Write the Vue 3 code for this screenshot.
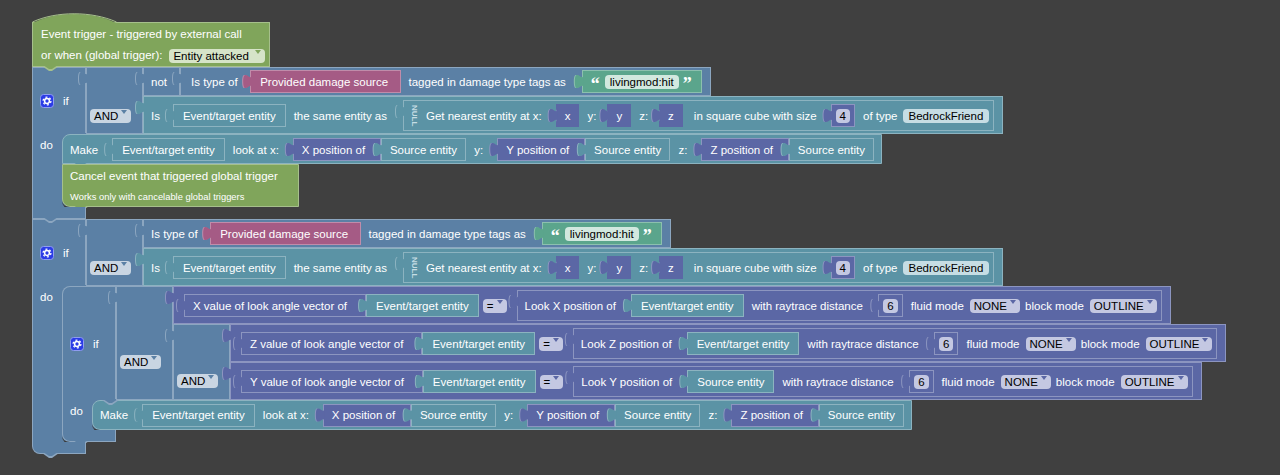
<script setup>
const axes = ['X', 'Y', 'Z']
const firstCompare = { axis: 'X', arg: 'Event/target entity' }
const restCompares = [
  { axis: 'Z', arg: 'Event/target entity' },
  { axis: 'Y', arg: 'Source entity' }
]
</script>

<template>
  <div class="canvas">
    <svg class="defs">
      <symbol id="gear" viewBox="0 0 14 14">
        <rect x="0.5" y="0.5" width="13" height="13" rx="3" fill="#2b3ce6" stroke="#8f9cf0" />
        <circle cx="7" cy="7" r="2.4" fill="none" stroke="#fff" stroke-width="1.5" />
        <circle cx="7" cy="7" r="3.9" fill="none" stroke="#fff" stroke-width="1.3" stroke-dasharray="2 2.08" />
      </symbol>
    </svg>

    <div class="b lime trigger notched">
      <svg class="hat" width="85" height="10" viewBox="0 0 85 10">
        <path d="M0.5,10 C24,-2 60,-2 84.5,10 Z" fill="#80a55b" />
        <path d="M0.5,9 C24,-2 60,-2 84.5,9" fill="none" stroke="#a6c08c" />
      </svg>
      <div class="tl">Event trigger - triggered by external call</div>
      <div class="tl">or when (global trigger):<span class="dd ddl">Entity attacked</span></div>
    </div>

    <!-- first if -->
    <div class="if">
      <div class="ifrow">
        <div class="b blue head notched n40">
          <svg class="gear"><use href="#gear" /></svg><span class="t">if</span>
        </div>
        <div class="b blue edge andcol"><span class="dd">AND</span></div>
        <div class="col">
          <div class="rowf">
            <div class="b blue edge rowa w37"><span class="t">not</span></div>
            <div class="b blue edge rowa shift">
              <span class="t">Is type of</span>
              <div class="sh pink in">Provided damage source</div>
              <span class="t">tagged in damage type tags as</span>
              <div class="strb str in"><span class="q">“</span><span class="pill lv">livingmod:hit</span><span class="q">”</span></div>
            </div>
          </div>
          <div class="b teal edge rowb">
            <span class="t">Is</span>
            <div class="sh ev teal in">Event/target entity</div>
            <span class="t">the same entity as</span>
            <div class="b teal in nullbox">
              <span class="null">NULL</span>
              <span class="t">Get nearest entity at x:</span>
              <div class="sh purple in vv v1">x</div>
              <span class="t">y:</span>
              <div class="sh purple in vv">y</div>
              <span class="t">z:</span>
              <div class="sh purple in vv">z</div>
              <span class="t isq">in square cube with size</span>
              <div class="sh purple in num"><span class="pill">4</span></div>
              <span class="t">of type</span>
              <span class="pill lv bf">BedrockFriend</span>
            </div>
          </div>
        </div>
      </div>
      <div class="dorow">
        <div class="b blue docol"><span class="t">do</span></div>
        <div class="stmts">
          <div class="b teal make notched first">
            <span class="t">Make</span>
            <div class="sh ev teal in">Event/target entity</div>
            <span class="t">look at x:</span>
            <template v-for="(a, i) in axes" :key="a">
              <span v-if="i" class="t">{{ a.toLowerCase() }}:</span>
              <div class="chain in">
                <div class="seg purple edge">{{ a }} position of</div>
                <div class="sh teal edge">Source entity</div>
              </div>
            </template>
          </div>
          <div class="b lime cancel notched last">
            <i class="corner"></i>
            <div class="c1">Cancel event that triggered global trigger</div>
            <div class="c2">Works only with cancelable global triggers</div>
          </div>
        </div>
      </div>
      <div class="b blue ifend notched e12"></div>
    </div>

    <!-- second if -->
    <div class="if">
      <div class="ifrow">
        <div class="b blue head notched n40">
          <svg class="gear"><use href="#gear" /></svg><span class="t">if</span>
        </div>
        <div class="b blue edge andcol"><span class="dd">AND</span></div>
        <div class="col">
          <div class="b blue edge rowa">
            <span class="t">Is type of</span>
            <div class="sh pink in">Provided damage source</div>
            <span class="t">tagged in damage type tags as</span>
            <div class="strb str in"><span class="q">“</span><span class="pill lv">livingmod:hit</span><span class="q">”</span></div>
          </div>
          <div class="b teal edge rowb">
            <span class="t">Is</span>
            <div class="sh ev teal in">Event/target entity</div>
            <span class="t">the same entity as</span>
            <div class="b teal in nullbox">
              <span class="null">NULL</span>
              <span class="t">Get nearest entity at x:</span>
              <div class="sh purple in vv v1">x</div>
              <span class="t">y:</span>
              <div class="sh purple in vv">y</div>
              <span class="t">z:</span>
              <div class="sh purple in vv">z</div>
              <span class="t isq">in square cube with size</span>
              <div class="sh purple in num"><span class="pill">4</span></div>
              <span class="t">of type</span>
              <span class="pill lv bf">BedrockFriend</span>
            </div>
          </div>
        </div>
      </div>
      <div class="dorow">
        <div class="b blue docol"><span class="t">do</span></div>
        <div class="stmts">
          <!-- inner if -->
          <div class="if">
            <div class="ifrow">
              <div class="b blue head notched n40 first">
                <svg class="gear"><use href="#gear" /></svg><span class="t">if</span>
              </div>
              <div class="b blue edge andcol deep"><span class="dd">AND</span></div>
              <div class="col">
                <div class="b purple edge cmp">
                  <div class="chain in">
                    <div class="seg purple edge lab">{{ firstCompare.axis }} value of look angle vector of</div>
                    <div class="sh ev teal edge">Event/target entity</div>
                  </div>
                  <span class="dd eq">=</span>
                  <div class="b purple in look">
                    <span class="t">Look {{ firstCompare.axis }} position of</span>
                    <div class="sh ev teal in">{{ firstCompare.arg }}</div>
                    <span class="t">with raytrace distance</span>
                    <div class="sh purple in num"><span class="pill">6</span></div>
                    <span class="t">fluid mode</span>
                    <span class="dd">NONE</span>
                    <span class="t tight">block mode</span>
                    <span class="dd">OUTLINE</span>
                  </div>
                </div>
                <div class="rowf">
                  <div class="b blue edge andcol two"><span class="dd">AND</span></div>
                  <div class="col">
                    <div v-for="d in restCompares" :key="d.axis" class="b purple edge cmp">
                      <div class="chain in">
                        <div class="seg purple edge lab">{{ d.axis }} value of look angle vector of</div>
                        <div class="sh ev teal edge">Event/target entity</div>
                      </div>
                      <span class="dd eq">=</span>
                      <div class="b purple in look">
                        <span class="t">Look {{ d.axis }} position of</span>
                        <div class="sh ev teal in">{{ d.arg }}</div>
                        <span class="t">with raytrace distance</span>
                        <div class="sh purple in num"><span class="pill">6</span></div>
                        <span class="t">fluid mode</span>
                        <span class="dd">NONE</span>
                        <span class="t tight">block mode</span>
                        <span class="dd">OUTLINE</span>
                      </div>
                    </div>
                  </div>
                </div>
              </div>
            </div>
            <div class="dorow">
              <div class="b blue docol"><span class="t">do</span></div>
              <div class="stmts">
                <div class="b teal make first last">
                  <i class="corner"></i>
                  <span class="t">Make</span>
                  <div class="sh ev teal in">Event/target entity</div>
                  <span class="t">look at x:</span>
                  <template v-for="(a, i) in axes" :key="a">
                    <span v-if="i" class="t">{{ a.toLowerCase() }}:</span>
                    <div class="chain in">
                      <div class="seg purple edge">{{ a }} position of</div>
                      <div class="sh teal edge">Source entity</div>
                    </div>
                  </template>
                </div>
              </div>
            </div>
            <div class="b blue ifend notched last">
              <i class="corner"></i>
            </div>
          </div>
        </div>
      </div>
      <div class="b blue ifend notched"></div>
    </div>
  </div>
</template>

<style>
html, body { margin: 0; background: #404040; }
</style>

<style scoped>
.canvas {
  width: 1280px;
  height: 475px;
  box-sizing: border-box;
  padding: 22px 0 0 32px;
  overflow: hidden;
  background: #404040;
  display: flex;
  flex-direction: column;
  align-items: flex-start;
  font: 11.5px "Liberation Sans", Arial, sans-serif;
  color: #fff;
}
.defs { display: none; }

.blue { --c: #5b80a5; --l: #8ca6c0; --p: #c9d5e2; }
.teal { --c: #5b93a5; --l: #8cb3c0; --p: #c6dde4; }
.purple { --c: #5b67a5; --l: #8c95c0; --p: #c4c8e2; }
.pink { --c: #a55b85; --l: #c08caa; --p: #eee; }
.str { --c: #5ba58c; --l: #8cc0ae; --p: #d2e8df; }
.lime { --c: #80a55b; --l: #a6c08c; --p: #d6e4c8; }

.b {
  position: relative;
  box-sizing: border-box;
  display: flex;
  align-items: center;
  gap: 8px;
  background: var(--c);
  border: 1px solid var(--l);
}
.t { white-space: nowrap; line-height: 14px; }
.tight { margin-left: -3px; }
.isq { margin-left: 3px; }

/* puzzle tabs */
.in, .edge { position: relative; z-index: 3; }
.in { margin-left: 6px; }
.in::before, .in::after, .edge::before, .edge::after {
  content: "";
  position: absolute;
  left: -10px;
  top: 2px;
  width: 10px;
  height: 17px;
  background: var(--l);
  clip-path: path("M10,16 C10,6 1,24 1,8.5 S10,11 10,1 Z");
}
.in::after, .edge::after {
  left: -9px;
  background: var(--c);
}
.chain.in::before, .chain.in::after { display: none; }
.chain.in { display: flex; z-index: auto; }

/* statement notches */
.notched { z-index: 2; }
.notched::before, .notched::after {
  content: "";
  position: absolute;
  left: 9px;
  bottom: -5px;
  width: 17px;
  height: 5px;
  background: var(--l);
  clip-path: polygon(0 0, 7px 5px, 10px 5px, 17px 0);
}
.notched::after {
  bottom: -4px;
  left: 10px;
  width: 15px;
  background: var(--c);
  clip-path: polygon(0 0, 6px 4px, 9px 4px, 15px 0);
}
.n40::before { left: 39px; }
.n40::after { left: 40px; }

/* trigger */
.trigger {
  width: 238px;
  height: 45px;
  flex-direction: column;
  align-items: flex-start;
  gap: 0;
  padding: 1px 0 0 8px;
  z-index: 5;
}
.hat { position: absolute; left: -1px; top: -10px; }
.tl { height: 21px; line-height: 21px; white-space: nowrap; display: flex; align-items: center; }
.dd.ddl { margin-left: 7px; padding-right: 16px; }

/* dropdowns and text fields */
.dd {
  position: relative;
  display: inline-block;
  height: 14px;
  line-height: 14px;
  padding: 0 13px 0 4px;
  border-radius: 4px;
  background: var(--p);
  color: #000;
  white-space: nowrap;
  flex: none;
}
.dd::after {
  content: "";
  position: absolute;
  right: 4px;
  top: 1px;
  border: 3px solid transparent;
  border-top: 4px solid var(--c);
  border-bottom: 0;
}
.pill {
  display: inline-block;
  height: 14px;
  line-height: 14px;
  padding: 0 4px;
  border-radius: 4px;
  background: var(--p);
  color: #000;
  white-space: nowrap;
}
.lv { padding: 0 5px; }
.bf { margin-left: -3px; padding: 0 6px; }

/* input blocks */
.sh {
  box-sizing: border-box;
  height: 23px;
  padding: 0 8.25px;
  display: flex;
  align-items: center;
  white-space: nowrap;
  background: var(--c);
  border: 1px solid var(--l);
}
.sh.ev { padding: 0 9px; }
.rowb > .sh.ev { margin-left: 5px; }
.sh.pink { padding: 0 11.5px 0 9px; margin-left: 4.5px; }
.sh.vv { padding: 0 8px; border-color: var(--c); margin-left: 3px; }
.sh.vv.v1 { margin-left: 6px; }
.sh.num { padding: 0 4px; }
.seg {
  box-sizing: border-box;
  height: 23px;
  padding: 0 14.5px 0 8px;
  display: flex;
  align-items: center;
  white-space: nowrap;
  background: var(--c);
  border: 1px solid var(--l);
  z-index: auto;
}
.seg.lab { padding-right: 18px; }
.strb {
  box-sizing: border-box;
  height: 23px;
  display: flex;
  align-items: center;
  gap: 4px;
  padding: 0 8px;
  background: var(--c);
  border: 1px solid var(--l);
  margin-left: 8px;
}
.q { font: 700 18px/14px "Liberation Serif", serif; color: #fff; height: 9px; width: 10px; }
.nullbox { height: 31px; padding: 0 4px 0 6px; margin-left: 8px; }
.null {
  writing-mode: vertical-rl;
  font-size: 8px;
  font-weight: 700;
  line-height: 8px;
  color: #c6dde4;
}

/* if block */
.if { display: flex; flex-direction: column; align-items: flex-start; }
.ifrow, .rowf, .dorow { display: flex; align-items: stretch; }
.col { display: flex; flex-direction: column; align-items: flex-start; }
.head {
  width: 54px;
  flex: none;
  padding-left: 7px;
  gap: 9px;
  border-bottom: 0;
}
.gear { width: 14px; height: 14px; flex: none; }
.andcol {
  width: 57px;
  flex: none;
  align-items: flex-end;
  padding: 0 0 10px 3px;
}
.deep { padding-bottom: 30px; }
.two { padding-bottom: 11px; }
.rowa { height: 29px; padding: 0 8px 0 7px; }
.rowa.shift { padding-left: 10px; }
.w37 { width: 37px; }
.rowb { height: 38px; padding: 1px 8px 0 7px; }
.docol {
  width: 30px;
  flex: none;
  align-items: flex-start;
  padding: 4px 0 0 7px;
  border-width: 0 0 0 1px;
}
.stmts {
  display: flex;
  flex-direction: column;
  align-items: flex-start;
  background: linear-gradient(#5b80a5, #5b80a5) 0 0 / 10px 100% no-repeat;
}
.make { height: 30px; padding: 0 7px 0 7px; }
.make.notched { padding-top: 1px; }
.first { border-top-left-radius: 8px; }
.last { border-bottom-left-radius: 8px; }
.cancel {
  height: 43px;
  flex-direction: column;
  align-items: flex-start;
  gap: 0;
  padding: 0 20px 0 7px;
}
.c1 { margin-top: 4px; line-height: 14px; white-space: nowrap; }
.c2 { margin-top: 8px; font-size: 9.4px; line-height: 11px; white-space: nowrap; }
.ifend {
  width: 54px;
  height: 12px;
  border-top: 0;
  border-bottom-left-radius: 8px;
  z-index: 4;
}
.e12 { border-radius: 0; }
.corner {
  position: absolute;
  left: -1px;
  bottom: -3px;
  width: 14px;
  height: 10px;
  box-sizing: border-box;
  border-bottom: 2px solid #3a3a3a;
  border-radius: 0 0 0 8px;
}

/* comparison rows */
.cmp { height: 38px; gap: 4px; padding: 1px 8px 0 6px; }
.cmp .chain.in { margin-left: 4px; }
.eq { padding-right: 13px; }
.look { height: 31px; padding: 0 4px 0 7px; margin-left: 6px; }
.look .sh.teal { margin-left: 7px; }
.look .sh.num { margin-left: 7.5px; }
.look .dd { margin-left: -2px; }
</style>
